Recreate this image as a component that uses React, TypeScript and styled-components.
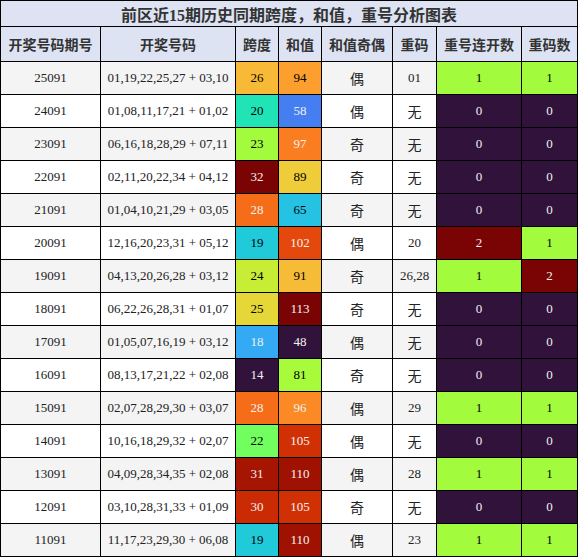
import React from 'react'
import styled, { createGlobalStyle } from 'styled-components'

type Row = [string, string, number, number, string, string, number, number]

const rows: Row[] = [
  ['25091', '01,19,22,25,27 + 03,10', 26, 94, '偶', '01', 1, 1],
  ['24091', '01,08,11,17,21 + 01,02', 20, 58, '偶', '无', 0, 0],
  ['23091', '06,16,18,28,29 + 07,11', 23, 97, '奇', '无', 0, 0],
  ['22091', '02,11,20,22,34 + 04,12', 32, 89, '奇', '无', 0, 0],
  ['21091', '01,04,10,21,29 + 03,05', 28, 65, '奇', '无', 0, 0],
  ['20091', '12,16,20,23,31 + 05,12', 19, 102, '偶', '20', 2, 1],
  ['19091', '04,13,20,26,28 + 03,12', 24, 91, '奇', '26,28', 1, 2],
  ['18091', '06,22,26,28,31 + 01,07', 25, 113, '奇', '无', 0, 0],
  ['17091', '01,05,07,16,19 + 03,12', 18, 48, '偶', '无', 0, 0],
  ['16091', '08,13,17,21,22 + 02,08', 14, 81, '奇', '无', 0, 0],
  ['15091', '02,07,28,29,30 + 03,07', 28, 96, '偶', '29', 1, 1],
  ['14091', '10,16,18,29,32 + 02,07', 22, 105, '偶', '无', 0, 0],
  ['13091', '04,09,28,34,35 + 02,08', 31, 110, '偶', '28', 1, 1],
  ['12091', '03,10,28,31,33 + 01,09', 30, 105, '奇', '无', 0, 0],
  ['11091', '11,17,23,29,30 + 06,08', 19, 110, '偶', '23', 1, 1],
]

const headers = ['开奖号码期号', '开奖号码', '跨度', '和值', '和值奇偶', '重码', '重号连开数', '重码数']

// turbo colormap, sampled every 16 steps of the 256 table
const turboStops = [
  [48, 18, 59], [64, 64, 162], [70, 107, 227], [66, 148, 255], [40, 188, 235],
  [24, 221, 194], [50, 242, 152], [109, 254, 98], [164, 252, 60], [205, 236, 52],
  [238, 207, 58], [253, 172, 52], [251, 126, 33], [235, 80, 14], [208, 47, 5],
  [169, 22, 1], [122, 4, 3],
]

const turbo = (t: number) => {
  const idx = Math.min(255, Math.max(0, t * 255))
  const seg = Math.min(15, Math.floor(idx / 16))
  const lo = seg * 16
  const hi = seg === 15 ? 255 : lo + 16
  const f = (idx - lo) / (hi - lo)
  return turboStops[seg].map((c, k) => (c + (turboStops[seg + 1][k] - c) * f) / 255)
}

const lin = (c: number) => (c <= 0.04045 ? c / 12.92 : Math.pow((c + 0.055) / 1.055, 2.4))

const gradient = (v: number, min: number, max: number) => {
  const [r, g, b] = turbo(max === min ? 0 : (v - min) / (max - min))
  const lum = 0.2126 * lin(r) + 0.7152 * lin(g) + 0.0722 * lin(b)
  const hex = [r, g, b].map((c) => Math.round(c * 255).toString(16).padStart(2, '0')).join('')
  return { background: `#${hex}`, color: lum < 0.408 ? '#f1f1f1' : '#000000' }
}

const range = (i: number) => {
  const vals = rows.map((r) => r[i] as number)
  return [Math.min(...vals), Math.max(...vals)]
}

const GlobalStyle = createGlobalStyle`
  body {
    margin: 0;
    background: #fff;
  }
`

const Board = styled.div`
  width: 578px;
  display: grid;
  grid-template-columns: 99px 134px 42px 42px 70px 43px 84px 55px;
  grid-template-rows: 25px 34px repeat(15, 32px);
  gap: 1px;
  padding: 1px;
  box-sizing: border-box;
  background: #000;
  font-family: 'Liberation Serif', 'Noto Sans CJK SC', serif;
`

const Title = styled.div`
  grid-column: 1 / -1;
  display: flex;
  align-items: center;
  justify-content: center;
  background: #dde3f3;
  color: #333;
  font-family: 'Liberation Serif', 'Noto Sans CJK SC', serif;
  font-weight: bold;
  font-size: 16px;
`

const Head = styled.div`
  display: flex;
  align-items: center;
  justify-content: center;
  background: #dde3f3;
  color: #333;
  font-family: 'Noto Sans CJK SC', sans-serif;
  font-weight: bold;
  font-size: 14px;
`

const Cell = styled.div<{ $odd: boolean; $cjk?: boolean }>`
  display: flex;
  align-items: center;
  justify-content: center;
  background: ${(p) => (p.$odd ? '#f4f4f4' : '#ffffff')};
  color: #222;
  font-size: ${(p) => (p.$cjk ? '14px' : '13px')};
  font-family: ${(p) => (p.$cjk ? "'Noto Sans CJK SC', sans-serif" : "'Liberation Serif', serif")};
`

const ColorCell = styled.div`
  display: flex;
  align-items: center;
  justify-content: center;
  font-size: 13px;
`

const colored = [2, 3, 6, 7]
const ranges: Record<number, number[]> = Object.fromEntries(colored.map((i) => [i, range(i)]))

export default function App() {
  return (
    <>
      <GlobalStyle />
      <Board>
        <Title>前区近15期历史同期跨度，和值，重号分析图表</Title>
        {headers.map((h) => (
          <Head key={h}>{h}</Head>
        ))}
        {rows.map((row, ri) =>
          row.map((val, ci) => {
            if (colored.includes(ci)) {
              const [min, max] = ranges[ci]
              return (
                <ColorCell key={`${ri}-${ci}`} style={gradient(val as number, min, max)}>
                  {val}
                </ColorCell>
              )
            }
            return (
              <Cell key={`${ri}-${ci}`} $odd={ri % 2 === 0} $cjk={val === '奇' || val === '偶' || val === '无'}>
                {val}
              </Cell>
            )
          })
        )}
      </Board>
    </>
  )
}
